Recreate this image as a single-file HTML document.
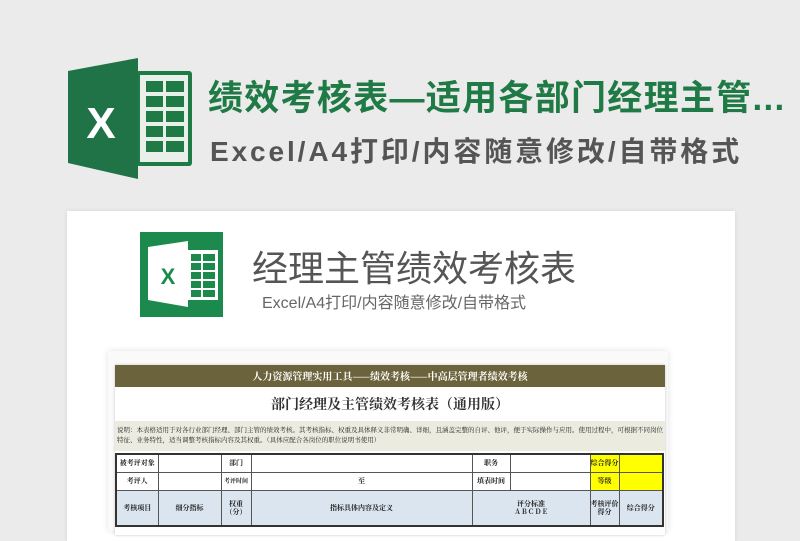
<!DOCTYPE html>
<html><head><meta charset="utf-8"><style>
*{margin:0;padding:0;box-sizing:border-box}
body{width:800px;height:526px;overflow:hidden;background:#ebebeb;position:relative;font-family:"Liberation Sans","Noto Sans CJK SC",sans-serif}
.a{position:absolute}
.t1{left:208px;top:70px;font-size:35px;font-weight:bold;color:#1f7a45;white-space:nowrap;letter-spacing:1.3px}
.t2{left:210px;top:130px;font-size:28px;color:#555;white-space:nowrap;font-weight:bold;letter-spacing:2.9px}
.card{left:67px;top:211px;width:668px;height:330px;background:#fff;box-shadow:0 0 4px rgba(0,0,0,.1)}
.t3{left:252px;top:240px;font-size:36px;color:#555;white-space:nowrap}
.t4{left:262px;top:289px;font-size:16px;color:#666;white-space:nowrap}
table{border-collapse:collapse;font-family:"Noto Serif CJK SC",serif;font-size:7px;font-weight:bold;color:#222;table-layout:fixed}
td{border:1px solid #555;text-align:center;height:18px;line-height:8px;overflow:hidden}
.hd td{background:#dbe5ef}
</style></head><body>
<svg class="a" style="left:66px;top:56px" width="130" height="125" viewBox="0 0 130 125">
<rect x="70" y="15" width="56" height="95" rx="3" fill="#1f7a45"/>
<rect x="74" y="19" width="48" height="87" fill="#e9efe9"/>
<g fill="#1f7a45">
<rect x="80" y="25" width="17" height="11"/><rect x="100" y="25" width="18" height="11"/>
<rect x="80" y="40" width="17" height="11"/><rect x="100" y="40" width="18" height="11"/>
<rect x="80" y="55" width="17" height="11"/><rect x="100" y="55" width="18" height="11"/>
<rect x="80" y="70" width="17" height="11"/><rect x="100" y="70" width="18" height="11"/>
<rect x="80" y="85" width="17" height="11"/><rect x="100" y="85" width="18" height="11"/>
</g>
<path d="M2 15 L72 2 L72 123 L2 107 Z" fill="#1f7346"/>
<text x="35" y="82" font-family="Liberation Sans" font-weight="bold" font-size="44" fill="#fff" text-anchor="middle">X</text>
</svg>
<div class="a t1">绩效考核表—适用各部门经理主管...</div>
<div class="a t2">Excel/A4打印/内容随意修改/自带格式</div>
<div class="a card"></div>
<svg class="a" style="left:140px;top:232px" width="83" height="85" viewBox="0 0 83 85">
<rect width="83" height="85" fill="#1c8a4c"/>
<rect x="48" y="18" width="30" height="50" fill="#fff"/>
<g fill="#1c8a4c"><rect x="51" y="22" width="10" height="7"/><rect x="63" y="22" width="12" height="7"/><rect x="51" y="31" width="10" height="7"/><rect x="63" y="31" width="12" height="7"/><rect x="51" y="40" width="10" height="7"/><rect x="63" y="40" width="12" height="7"/><rect x="51" y="49" width="10" height="7"/><rect x="63" y="49" width="12" height="7"/><rect x="51" y="58" width="10" height="7"/><rect x="63" y="58" width="12" height="7"/></g>
<path d="M8 15 L48 9 L48 75 L8 68 Z" fill="#fff"/>
<text x="28" y="52" font-family="Liberation Sans" font-weight="bold" font-size="22" fill="#1c8a4c" text-anchor="middle">X</text>
</svg>
<div class="a t3">经理主管绩效考核表</div>
<div class="a t4">Excel/A4打印/内容随意修改/自带格式</div>
<div class="a" style="left:108px;top:351px;width:560px;height:180px;background:#fafafa;box-shadow:0 0 6px rgba(0,0,0,.12)"></div>
<div class="a" style="left:115px;top:365px;width:550px;height:170px;background:#fff;box-shadow:0 0 3px rgba(0,0,0,.2)">
<div style="height:22px;background:#6b633b;color:#fff;font-size:10px;font-weight:bold;text-align:center;line-height:22px;font-family:'Noto Serif CJK SC',serif">人力资源管理实用工具——绩效考核——中高层管理者绩效考核</div>
<div style="height:34px;text-align:center;line-height:34px;font-size:14px;font-weight:bold;color:#333;font-family:'Noto Serif CJK SC',serif">部门经理及主管绩效考核表（通用版）</div>
<div style="height:30px;background:#ecebe0;font-size:6.5px;line-height:10px;padding:4px 2px;color:#222;font-family:'Noto Serif CJK SC',serif">说明：本表格适用于对各行业部门经理、部门主管的绩效考核。其考核指标、权重及具体释义非常明确、详细，且涵盖完整的自评、他评，便于实际操作与应用。使用过程中，可根据不同岗位特征、业务特性，适当调整考核指标内容及其权重。（具体应配合各岗位的职位说明书使用）</div>
<table style="width:549px;margin-top:2px;border:2px solid #333">
<tr><td style="width:42px">被考评对象</td><td style="width:63px"></td><td style="width:30px">部门</td><td style="width:221px"></td><td style="width:38px">职务</td><td style="width:80px"></td><td style="width:29px;background:#ff0">综合得分</td><td style="background:#ff0"></td></tr>
<tr><td>考评人</td><td></td><td style="white-space:nowrap;font-size:6px">考评时间</td><td>至</td><td>填表时间</td><td></td><td style="background:#ff0">等级</td><td style="background:#ff0"></td></tr>
<tr class="hd"><td style="height:36px">考核项目</td><td>细分指标</td><td>权重<br>（分）</td><td>指标具体内容及定义</td><td colspan="2">评分标准<br>A B C D E</td><td>考核评价得分</td><td>综合得分</td></tr>
</table>
</div>
</body></html>
